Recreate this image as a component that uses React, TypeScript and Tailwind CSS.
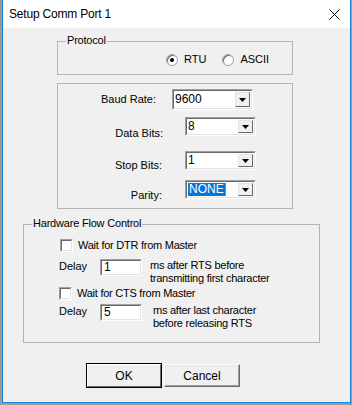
const font = { fontFamily: '"Liberation Sans", Arial, sans-serif' };

function Group({ label, className, children }: { label?: string; className: string; children?: React.ReactNode }) {
  return (
    <div className={`relative border border-[#b4b4b4] ${className}`}>
      {label && (
        <span className="absolute -top-[8px] left-[8px] bg-[#f0f0f0] px-[1px] text-[11px] leading-[13px] tracking-[-0.2px]">
          {label}
        </span>
      )}
      {children}
    </div>
  );
}

function Combo({ value, w, h, selected }: { value: string; w: string; h: string; selected?: boolean }) {
  return (
    <div
      className={`flex items-stretch border border-t-[#a0a0a0] border-l-[#a0a0a0] border-r-white border-b-white ${w} ${h}`}
    >
      <div className="flex flex-1 items-stretch border border-t-[#696969] border-l-[#696969] border-r-[#e3e3e3] border-b-[#e3e3e3] bg-white">
        <div className="flex flex-1 items-center pl-[1px] text-[12px] leading-[13px]">
          {selected ? (
            <span className="flex items-center">
              <span className="bg-[#0078d7] px-[1px] text-white">{value}</span>
              <span className="h-[13px] w-[1px] bg-[#e8731b]" />
            </span>
          ) : (
            value
          )}
        </div>
        <div className="my-[1px] mr-[1px] flex w-[15px] items-center justify-center border border-t-[#e3e3e3] border-l-[#e3e3e3] border-r-[#696969] border-b-[#696969] bg-[#f0f0f0]">
          <svg width="7" height="4" viewBox="0 0 7 4">
            <path d="M0 0h7L3.5 4z" fill="#000" />
          </svg>
        </div>
      </div>
    </div>
  );
}

function Check({ label }: { label: string }) {
  return (
    <div className="flex items-center gap-[5px]">
      <div className="h-[13px] w-[13px] border border-t-[#a0a0a0] border-l-[#a0a0a0] border-r-white border-b-white">
        <div className="h-full w-full border border-t-[#696969] border-l-[#696969] border-r-[#e3e3e3] border-b-[#e3e3e3] bg-white" />
      </div>
      <span className="text-[11px] leading-[13px] tracking-[-0.25px]">{label}</span>
    </div>
  );
}

function Radio({ label, checked }: { label: string; checked?: boolean }) {
  return (
    <div className="flex items-center gap-[6px]">
      <div className="flex h-[12px] w-[12px] items-center justify-center rounded-full border border-[#a0a0a0] bg-white shadow-[inset_1px_1px_0_#696969]">
        {checked && <div className="h-[4px] w-[4px] rounded-full bg-black" />}
      </div>
      <span className="text-[11px] leading-[13px]">{label}</span>
    </div>
  );
}

function Field({ value }: { value: string }) {
  return (
    <div className="h-[17px] w-[42px] border border-t-[#a0a0a0] border-l-[#a0a0a0] border-r-white border-b-white">
      <div className="flex h-full items-center border border-t-[#696969] border-l-[#696969] border-r-[#e3e3e3] border-b-[#e3e3e3] bg-white pl-[2px] text-[12px] leading-[13px]">
        {value}
      </div>
    </div>
  );
}

function DelayRow({ value, lines, textGap }: { value: string; lines: string[]; textGap: string }) {
  return (
    <div className="ml-[35px] flex items-start">
      <span className="mt-[1px] w-[41px] text-[11px] leading-[13px]">Delay</span>
      <Field value={value} />
      <div className={`text-[11px] leading-[13px] tracking-[-0.25px] ${textGap}`}>
        {lines.map((l) => (
          <div key={l}>{l}</div>
        ))}
      </div>
    </div>
  );
}

export default function App() {
  return (
    <div className="h-[405px] w-[352px] bg-[#9a9a9a] text-black" style={font}>
      <div className="ml-[2px] flex h-[403px] w-[349px] flex-col border-x border-b border-[#1a86d9]">
        <div className="flex h-[28px] items-center justify-between bg-white pl-[6px] pr-[10px]">
          <span className="text-[12px] tracking-[-0.2px]">Setup Comm Port 1</span>
          <svg width="11" height="11" viewBox="0 0 11 11">
            <path d="M0.5 0.5l10 10M10.5 0.5l-10 10" stroke="#000" strokeWidth="1" />
          </svg>
        </div>
        <div className="flex flex-1 flex-col bg-[#f0f0f0]">
          <Group label="Protocol" className="ml-[54px] mt-[13px] h-[34px] w-[236px]">
            <div className="ml-[108px] mt-[11px] flex gap-[16px]">
              <Radio label="RTU" checked />
              <Radio label="ASCII" />
            </div>
          </Group>

          <Group className="ml-[54px] mt-[8px] h-[126px] w-[236px]">
            <div className="mt-[5px] flex items-center">
              <span className="w-[98px] text-right text-[11px] leading-[13px]">Baud Rate:</span>
              <div className="ml-[16px]">
                <Combo value="9600" w="w-[81px]" h="h-[21px]" />
              </div>
            </div>
            <div className="mt-[7px] flex items-start">
              <span className="mt-[10px] w-[105px] text-right text-[11px] leading-[13px]">Data Bits:</span>
              <div className="ml-[22px]">
                <Combo value="8" w="w-[71px]" h="h-[19px]" />
              </div>
            </div>
            <div className="mt-[11px] flex items-start">
              <span className="mt-[8px] w-[104px] text-right text-[11px] leading-[13px]">Stop Bits:</span>
              <div className="ml-[23px]">
                <Combo value="1" w="w-[71px]" h="h-[19px]" />
              </div>
            </div>
            <div className="mt-[8px] flex items-start">
              <span className="mt-[9px] w-[104px] text-right text-[11px] leading-[13px]">Parity:</span>
              <div className="ml-[23px]">
                <Combo value="NONE" w="w-[71px]" h="h-[19px]" selected />
              </div>
            </div>
          </Group>

          <Group label="Hardware Flow Control" className="ml-[20px] mt-[15px] h-[119px] w-[297px]">
            <div className="ml-[36px] mt-[14px]">
              <Check label="Wait for DTR from Master" />
            </div>
            <div className="mt-[7px]">
              <DelayRow value="1" lines={["ms after RTS before", "transmitting first character"]} textGap="ml-[8px]" />
            </div>
            <div className="ml-[35px] mt-[2px]">
              <Check label="Wait for CTS from Master" />
            </div>
            <div className="mt-[4px]">
              <DelayRow value="5" lines={["ms after last character", "before releasing RTS"]} textGap="ml-[11px]" />
            </div>
          </Group>

          <div className="ml-[83px] mt-[20px] flex items-center gap-[2px]">
            <div className="h-[25px] w-[76px] border border-black">
              <div className="flex h-full items-center justify-center border border-t-white border-l-white border-r-[#696969] border-b-[#696969] bg-[#f0f0f0] text-[12px]">
                OK
              </div>
            </div>
            <div className="h-[23px] w-[76px] border border-t-white border-l-white border-r-[#696969] border-b-[#696969]">
              <div className="flex h-full items-center justify-center border border-t-[#e3e3e3] border-l-[#e3e3e3] border-r-[#a0a0a0] border-b-[#a0a0a0] bg-[#f0f0f0] text-[12px]">
                Cancel
              </div>
            </div>
          </div>
        </div>
      </div>
    </div>
  );
}
